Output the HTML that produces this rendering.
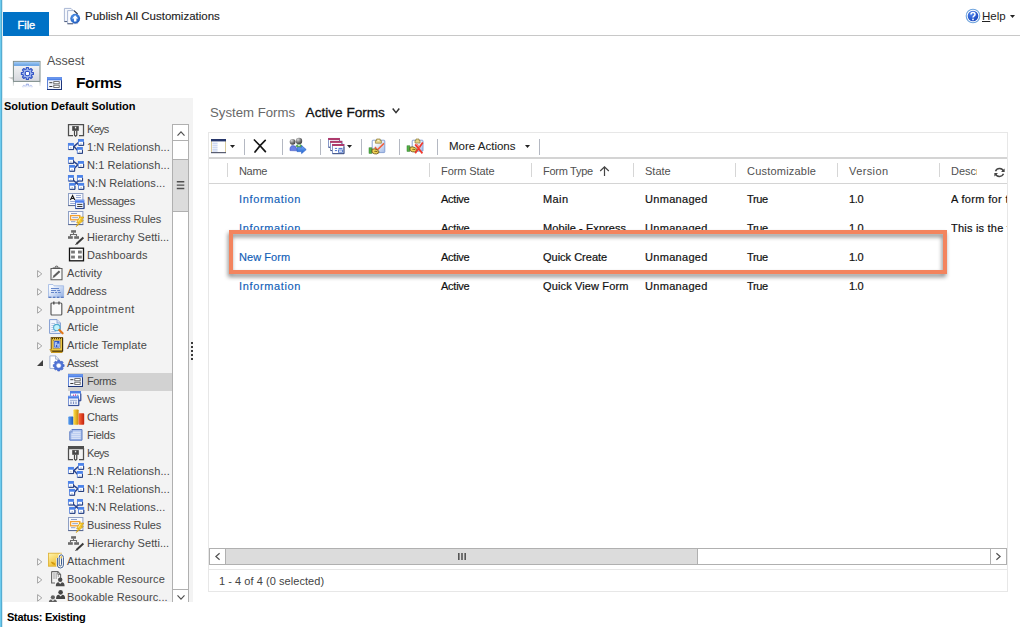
<!DOCTYPE html>
<html><head><meta charset="utf-8"><title>Forms</title><style>
html,body{margin:0;padding:0;}
body{width:1020px;height:627px;overflow:hidden;background:#fff;position:relative;font-family:"Liberation Sans",sans-serif;font-size:11px;color:#333;}
.a{position:absolute;white-space:nowrap;}
.t{position:absolute;white-space:nowrap;line-height:14px;height:14px;}
svg{position:absolute;overflow:visible;}
.sep{position:absolute;width:1px;background:#b4b8c2;}
.hsep{position:absolute;width:1px;height:14px;top:163px;background:#d6d6d6;}
.cell{position:absolute;white-space:nowrap;line-height:14px;height:14px;color:#111;-webkit-text-stroke:0.2px #111;}
.lnk{-webkit-text-stroke:0.15px #1160b7 !important;}
.lnk{color:#1160b7;}
.hd{position:absolute;white-space:nowrap;line-height:14px;height:14px;color:#505050;top:164px;}
.ti{position:absolute;white-space:nowrap;line-height:14px;height:14px;color:#484848;}
</style></head><body>
<div class="a" style="left:0;top:0;width:1px;height:627px;background:#6ccbee"></div>
<div class="a" style="left:1px;top:0;width:1px;height:627px;background:#55add2"></div>
<div class="a" style="left:2px;top:0;width:1px;height:627px;background:#d8e9f0"></div>
<div class="a" style="left:3px;top:35px;width:1017px;height:1px;background:#c8c8c8"></div>
<div class="a" style="left:3px;top:12px;width:46px;height:24px;background:#0072c6"></div>
<div class="t" style="left:17.5px;top:17.5px;color:#fff;font-size:11px;letter-spacing:0px;-webkit-text-stroke:0.4px #fff">File</div>
<div class="t" style="left:85px;top:9px;color:#222;font-size:11.5px;-webkit-text-stroke:0.12px #222">Publish All Customizations</div>
<div class="t" style="left:982px;top:9px;color:#222;font-size:11.5px"><span style="text-decoration:underline">H</span>elp</div>
<svg style="left:1010px;top:15px" width="5" height="3" viewBox="0 0 5 3"><path d="M0 0 H5 L2.5 3 Z" fill="#222"/></svg>
<div class="t" style="left:47px;top:53px;font-size:12.5px;color:#505050;line-height:16px;height:16px">Assest</div>
<div class="t" style="left:76px;top:73px;font-size:15.5px;font-weight:bold;color:#000;line-height:20px;height:20px;letter-spacing:-0.35px">Forms</div>
<div class="a" style="left:3px;top:98px;width:190px;height:504px;background:#f3f3f3"></div>
<div class="t" style="left:4px;top:99px;font-weight:bold;color:#000">Solution Default Solution</div>
<div class="a" style="left:68px;top:373px;width:104px;height:18px;background:#d2d2d2"></div>
<div class="ti" style="left:87px;top:122px;letter-spacing:-0.7px">Keys</div>
<div class="ti" style="left:87px;top:140px;letter-spacing:0.09px">1:N Relationsh...</div>
<div class="ti" style="left:87px;top:158px;letter-spacing:0.09px">N:1 Relationsh...</div>
<div class="ti" style="left:87px;top:176px;letter-spacing:0.08px">N:N Relations...</div>
<div class="ti" style="left:87px;top:194px;letter-spacing:-0.28px">Messages</div>
<div class="ti" style="left:87px;top:212px;letter-spacing:-0.12px">Business Rules</div>
<div class="ti" style="left:87px;top:230px;letter-spacing:0.05px">Hierarchy Setti...</div>
<div class="ti" style="left:87px;top:248px;letter-spacing:0.12px">Dashboards</div>
<div class="ti" style="left:67px;top:266px;letter-spacing:0.04px">Activity</div>
<svg style="left:37px;top:270px" width="6" height="8" viewBox="0 0 6 8"><path d="M0.6 0.6 L4.8 3.9 L0.6 7.2 Z" fill="#fbfbfb" stroke="#a3a3a3" stroke-width="1"/></svg>
<div class="ti" style="left:67px;top:284px;letter-spacing:-0.11px">Address</div>
<svg style="left:37px;top:288px" width="6" height="8" viewBox="0 0 6 8"><path d="M0.6 0.6 L4.8 3.9 L0.6 7.2 Z" fill="#fbfbfb" stroke="#a3a3a3" stroke-width="1"/></svg>
<div class="ti" style="left:67px;top:302px;letter-spacing:0.56px">Appointment</div>
<svg style="left:37px;top:306px" width="6" height="8" viewBox="0 0 6 8"><path d="M0.6 0.6 L4.8 3.9 L0.6 7.2 Z" fill="#fbfbfb" stroke="#a3a3a3" stroke-width="1"/></svg>
<div class="ti" style="left:67px;top:320px;letter-spacing:0.13px">Article</div>
<svg style="left:37px;top:324px" width="6" height="8" viewBox="0 0 6 8"><path d="M0.6 0.6 L4.8 3.9 L0.6 7.2 Z" fill="#fbfbfb" stroke="#a3a3a3" stroke-width="1"/></svg>
<div class="ti" style="left:67px;top:338px;letter-spacing:0.12px">Article Template</div>
<svg style="left:37px;top:342px" width="6" height="8" viewBox="0 0 6 8"><path d="M0.6 0.6 L4.8 3.9 L0.6 7.2 Z" fill="#fbfbfb" stroke="#a3a3a3" stroke-width="1"/></svg>
<div class="ti" style="left:67px;top:356px;letter-spacing:-0.35px">Assest</div>
<svg style="left:37px;top:360px" width="6" height="6" viewBox="0 0 6 6"><path d="M6 0 L6 6 L0 6 Z" fill="#404040"/></svg>
<div class="ti" style="left:87px;top:374px;letter-spacing:-0.44px">Forms</div>
<div class="ti" style="left:87px;top:392px;letter-spacing:-0.24px">Views</div>
<div class="ti" style="left:87px;top:410px;letter-spacing:-0.24px">Charts</div>
<div class="ti" style="left:87px;top:428px;letter-spacing:-0.23px">Fields</div>
<div class="ti" style="left:87px;top:446px;letter-spacing:-0.7px">Keys</div>
<div class="ti" style="left:87px;top:464px;letter-spacing:0.09px">1:N Relationsh...</div>
<div class="ti" style="left:87px;top:482px;letter-spacing:0.09px">N:1 Relationsh...</div>
<div class="ti" style="left:87px;top:500px;letter-spacing:0.08px">N:N Relations...</div>
<div class="ti" style="left:87px;top:518px;letter-spacing:-0.12px">Business Rules</div>
<div class="ti" style="left:87px;top:536px;letter-spacing:0.05px">Hierarchy Setti...</div>
<div class="ti" style="left:67px;top:554px;letter-spacing:0.21px">Attachment</div>
<svg style="left:37px;top:558px" width="6" height="8" viewBox="0 0 6 8"><path d="M0.6 0.6 L4.8 3.9 L0.6 7.2 Z" fill="#fbfbfb" stroke="#a3a3a3" stroke-width="1"/></svg>
<div class="ti" style="left:67px;top:572px;letter-spacing:0.11px">Bookable Resource</div>
<svg style="left:37px;top:576px" width="6" height="8" viewBox="0 0 6 8"><path d="M0.6 0.6 L4.8 3.9 L0.6 7.2 Z" fill="#fbfbfb" stroke="#a3a3a3" stroke-width="1"/></svg>
<div class="ti" style="left:67px;top:590px;letter-spacing:0.09px">Bookable Resourc...</div>
<svg style="left:37px;top:594px" width="6" height="8" viewBox="0 0 6 8"><path d="M0.6 0.6 L4.8 3.9 L0.6 7.2 Z" fill="#fbfbfb" stroke="#a3a3a3" stroke-width="1"/></svg>
<div class="a" style="left:172px;top:124px;width:15px;height:478px;background:#fff;border-left:1px solid #b0b0b0;border-right:1px solid #b0b0b0"></div>
<div class="a" style="left:172px;top:124px;width:15px;height:15px;background:#fff;border:1px solid #b0b0b0"></div>
<svg style="left:176.5px;top:130.5px" width="8" height="5" viewBox="0 0 8 5"><path d="M0.5 4.7 L4 0.9 L7.5 4.7" fill="none" stroke="#505050" stroke-width="1.2"/></svg>
<div class="a" style="left:172px;top:159px;width:15px;height:51px;background:#dcdcdc;border:1px solid #b0b0b0"></div>
<svg style="left:176px;top:180px" width="9" height="10" viewBox="0 0 9 10"><path d="M0.8 1.7 H8.3 M0.8 5.1 H8.3 M0.8 8.5 H8.3" stroke="#505050" stroke-width="1.4"/></svg>
<div class="a" style="left:172px;top:589px;width:15px;height:13px;background:#fff;border:1px solid #b0b0b0;border-bottom:none"></div>
<svg style="left:176.5px;top:595px" width="8" height="5" viewBox="0 0 8 5"><path d="M0.5 0.3 L4 4.1 L7.5 0.3" fill="none" stroke="#505050" stroke-width="1.2"/></svg>
<div class="a" style="left:191px;top:342px;width:2px;height:2px;background:#3a3a3a"></div>
<div class="a" style="left:191px;top:346px;width:2px;height:2px;background:#3a3a3a"></div>
<div class="a" style="left:191px;top:350px;width:2px;height:2px;background:#3a3a3a"></div>
<div class="a" style="left:191px;top:354px;width:2px;height:2px;background:#3a3a3a"></div>
<div class="a" style="left:191px;top:358px;width:2px;height:2px;background:#3a3a3a"></div>
<div class="t" style="left:210px;top:104px;font-size:13.2px;color:#686868;line-height:18px;height:18px">System Forms</div>
<div class="t" style="left:305.6px;top:104.4px;font-size:13.6px;color:#111;line-height:18px;height:18px;-webkit-text-stroke:0.3px #111">Active Forms</div>
<svg style="left:392px;top:108px" width="8" height="6" viewBox="0 0 8 6"><path d="M0.7 0.5 L4 4.6 L7.3 0.5" fill="none" stroke="#333" stroke-width="1.5"/></svg>
<div class="a" style="left:208px;top:132px;width:798px;height:436px;border:1px solid #e7e7e7;border-bottom:none"></div>
<div class="a" style="left:209px;top:157px;width:798px;height:2px;background:#d4d4d4"></div>
<div class="a" style="left:209px;top:183px;width:798px;height:1px;background:#d4d4d4"></div>
<div class="sep" style="left:244px;top:139px;height:16px"></div>
<div class="sep" style="left:282px;top:139px;height:16px"></div>
<div class="sep" style="left:320px;top:139px;height:16px"></div>
<div class="sep" style="left:361px;top:139px;height:16px"></div>
<div class="sep" style="left:399px;top:139px;height:16px"></div>
<div class="sep" style="left:437px;top:139px;height:16px"></div>
<div class="sep" style="left:539px;top:139px;height:16px"></div>
<div class="t" style="left:449px;top:139px;font-size:11.5px;color:#222;-webkit-text-stroke:0.08px #222">More Actions</div>
<svg style="left:525px;top:145px" width="5" height="3" viewBox="0 0 5 3"><path d="M0 0 H5 L2.5 3 Z" fill="#222"/></svg>
<svg style="left:230px;top:145px" width="5" height="3" viewBox="0 0 5 3"><path d="M0 0 H5 L2.5 3 Z" fill="#222"/></svg>
<svg style="left:347px;top:145px" width="5" height="3" viewBox="0 0 5 3"><path d="M0 0 H5 L2.5 3 Z" fill="#222"/></svg>
<div class="hsep" style="left:227px"></div>
<div class="hsep" style="left:429px"></div>
<div class="hsep" style="left:531px"></div>
<div class="hsep" style="left:633px"></div>
<div class="hsep" style="left:735px"></div>
<div class="hsep" style="left:837px"></div>
<div class="hsep" style="left:939px"></div>
<div class="hd" style="left:239px;letter-spacing:-0.34px">Name</div>
<div class="hd" style="left:441px;letter-spacing:-0.09px">Form State</div>
<div class="hd" style="left:543px;letter-spacing:-0.28px">Form Type</div>
<div class="hd" style="left:645px">State</div>
<div class="hd" style="left:747px;letter-spacing:0.21px">Customizable</div>
<div class="hd" style="left:849px;letter-spacing:0.4px">Version</div>
<div class="hd" style="left:951px;width:26px;overflow:hidden">Descr</div>
<svg style="left:599px;top:166px" width="11" height="10" viewBox="0 0 11 10"><path d="M5.5 0.8 V10 M1.2 5 L5.5 0.8 L9.8 5" fill="none" stroke="#444" stroke-width="1.2"/></svg>
<div class="cell lnk" style="left:239px;top:192px;letter-spacing:0.64px">Information</div>
<div class="cell" style="left:441px;top:192px;letter-spacing:-0.25px">Active</div>
<div class="cell" style="left:543px;top:192px;letter-spacing:0.39px">Main</div>
<div class="cell" style="left:645px;top:192px;letter-spacing:0.31px">Unmanaged</div>
<div class="cell" style="left:747px;top:192px;letter-spacing:-0.36px">True</div>
<div class="cell" style="left:849px;top:192px;letter-spacing:-0.34px">1.0</div>
<div class="cell" style="left:951px;top:192px;width:55.6px;overflow:hidden;letter-spacing:0.34px">A form for this entity</div>
<div class="cell lnk" style="left:239px;top:221px;letter-spacing:0.64px">Information</div>
<div class="cell" style="left:441px;top:221px;letter-spacing:-0.25px">Active</div>
<div class="cell" style="left:543px;top:221px;letter-spacing:0.08px">Mobile - Express</div>
<div class="cell" style="left:645px;top:221px;letter-spacing:0.31px">Unmanaged</div>
<div class="cell" style="left:747px;top:221px;letter-spacing:-0.36px">True</div>
<div class="cell" style="left:849px;top:221px;letter-spacing:-0.34px">1.0</div>
<div class="cell" style="left:951px;top:221px;width:55.6px;overflow:hidden;letter-spacing:0.22px">This is the form</div>
<div class="cell lnk" style="left:239px;top:250px;letter-spacing:0.06px">New Form</div>
<div class="cell" style="left:441px;top:250px;letter-spacing:-0.25px">Active</div>
<div class="cell" style="left:543px;top:250px">Quick Create</div>
<div class="cell" style="left:645px;top:250px;letter-spacing:0.31px">Unmanaged</div>
<div class="cell" style="left:747px;top:250px;letter-spacing:-0.36px">True</div>
<div class="cell" style="left:849px;top:250px;letter-spacing:-0.34px">1.0</div>
<div class="cell lnk" style="left:239px;top:279px;letter-spacing:0.64px">Information</div>
<div class="cell" style="left:441px;top:279px;letter-spacing:-0.25px">Active</div>
<div class="cell" style="left:543px;top:279px;letter-spacing:0.13px">Quick View Form</div>
<div class="cell" style="left:645px;top:279px;letter-spacing:0.31px">Unmanaged</div>
<div class="cell" style="left:747px;top:279px;letter-spacing:-0.36px">True</div>
<div class="cell" style="left:849px;top:279px;letter-spacing:-0.34px">1.0</div>
<div class="a" style="left:229px;top:230px;width:710px;height:36px;border:4px solid #f3845e;filter:drop-shadow(-1px 3px 2px rgba(0,0,0,0.45))"></div>
<div class="a" style="left:209px;top:548px;width:796px;height:15px;background:#fff;border:1px solid #b0b0b0"></div>
<div class="a" style="left:225px;top:548px;width:471px;height:15px;background:#dcdcdc;border:1px solid #b0b0b0"></div>
<div class="a" style="left:990px;top:548px;width:1px;height:17px;background:#b0b0b0"></div>
<svg style="left:457px;top:553px" width="10" height="7" viewBox="0 0 10 7"><path d="M1.8 0 V7 M5 0 V7 M8.2 0 V7" stroke="#555" stroke-width="1.6"/></svg>
<svg style="left:214.5px;top:553px" width="5" height="7" viewBox="0 0 5 7"><path d="M4.6 0.3 L0.9 3.5 L4.6 6.7" fill="none" stroke="#505050" stroke-width="1.2"/></svg>
<svg style="left:996px;top:553px" width="5" height="7" viewBox="0 0 5 7"><path d="M0.4 0.3 L4.1 3.5 L0.4 6.7" fill="none" stroke="#505050" stroke-width="1.2"/></svg>
<div class="a" style="left:208px;top:569px;width:798px;height:21px;border:1px solid #e7e7e7"></div>
<div class="t" style="left:219px;top:574px;color:#444;letter-spacing:0.05px">1 - 4 of 4 (0 selected)</div>
<svg style="left:68px;top:124px" width="17" height="15" viewBox="0 0 17 15"><path d="M5 11.6 H0.5 V0.5 H15.5 V11.6 H11" fill="none" stroke="#4e4e4e" stroke-width="1.25"/><rect x="4.2" y="2.1" width="6.6" height="4.7" fill="#464646"/><rect x="6.9" y="2.8" width="1.3" height="1.6" fill="#f0f0f0"/><path d="M5.9 6.8 V11.4 L7.6 13 L9.4 11.4 V6.8 Z" fill="#464646"/><rect x="7.05" y="7" width="1.1" height="4.2" fill="#f4f4f4"/></svg>
<svg style="left:68px;top:139px" width="17" height="16" viewBox="0 0 17 16"><path d="M6 7.4 L10.4 3.6 M6 7.4 L9.4 11.2" stroke="#2a458f" stroke-width="1.5" fill="none"/><rect x="0.4" y="4.4" width="5" height="6" fill="#fff" stroke="#5f88dc" stroke-width="0.9"/><rect x="0.10000000000000003" y="4.1000000000000005" width="5.6" height="2.6" fill="#4a82ea"/><path d="M0.6000000000000001 10.6 H5.6000000000000005 V7.0" fill="none" stroke="#1d3370" stroke-width="0.9"/><rect x="2.4" y="8.3" width="1" height="1" fill="#8a93a8"/><rect x="10.5" y="0.5" width="5" height="5.7" fill="#fff" stroke="#5f88dc" stroke-width="0.9"/><rect x="10.2" y="0.2" width="5.6" height="2.6" fill="#4a82ea"/><path d="M10.7 6.4 H15.7 V3.1" fill="none" stroke="#1d3370" stroke-width="0.9"/><rect x="12.5" y="4.4" width="1" height="1" fill="#8a93a8"/><rect x="9.3" y="8.5" width="5" height="5.7" fill="#fff" stroke="#5f88dc" stroke-width="0.9"/><rect x="9.0" y="8.2" width="5.6" height="2.6" fill="#4a82ea"/><path d="M9.5 14.399999999999999 H14.5 V11.1" fill="none" stroke="#1d3370" stroke-width="0.9"/><rect x="11.3" y="12.4" width="1" height="1" fill="#8a93a8"/></svg>
<svg style="left:68px;top:157px" width="17" height="16" viewBox="0 0 17 16"><path d="M5.6 4.6 L10 7.6 M6.6 11 L10 7.6" stroke="#2a458f" stroke-width="1.5" fill="none"/><rect x="0.4" y="0.5" width="5" height="5.7" fill="#fff" stroke="#5f88dc" stroke-width="0.9"/><rect x="0.10000000000000003" y="0.2" width="5.6" height="2.6" fill="#4a82ea"/><path d="M0.6000000000000001 6.4 H5.6000000000000005 V3.1" fill="none" stroke="#1d3370" stroke-width="0.9"/><rect x="2.4" y="4.4" width="1" height="1" fill="#8a93a8"/><rect x="1.5" y="8.4" width="5" height="5.7" fill="#fff" stroke="#5f88dc" stroke-width="0.9"/><rect x="1.2" y="8.1" width="5.6" height="2.6" fill="#4a82ea"/><path d="M1.7 14.3 H6.7 V11.0" fill="none" stroke="#1d3370" stroke-width="0.9"/><rect x="3.5" y="12.3" width="1" height="1" fill="#8a93a8"/><rect x="10.3" y="4.5" width="5.2" height="5.8" fill="#fff" stroke="#5f88dc" stroke-width="0.9"/><rect x="10.0" y="4.2" width="5.8" height="2.6" fill="#4a82ea"/><path d="M10.5 10.5 H15.7 V7.1" fill="none" stroke="#1d3370" stroke-width="0.9"/><rect x="12.3" y="8.4" width="1.2000000000000002" height="1" fill="#8a93a8"/></svg>
<svg style="left:68px;top:175px" width="17" height="16" viewBox="0 0 17 16"><path d="M5 5 L11.6 10.6 M11 5 L5.4 10.6" stroke="#2a458f" stroke-width="1.5" fill="none"/><rect x="0.4" y="0.5" width="5" height="5.4" fill="#fff" stroke="#5f88dc" stroke-width="0.9"/><rect x="0.10000000000000003" y="0.2" width="5.6" height="2.6" fill="#4a82ea"/><path d="M0.6000000000000001 6.1000000000000005 H5.6000000000000005 V3.1" fill="none" stroke="#1d3370" stroke-width="0.9"/><rect x="2.4" y="4.4" width="1" height="1" fill="#8a93a8"/><rect x="9.4" y="0.5" width="5" height="5.4" fill="#fff" stroke="#5f88dc" stroke-width="0.9"/><rect x="9.1" y="0.2" width="5.6" height="2.6" fill="#4a82ea"/><path d="M9.6 6.1000000000000005 H14.6 V3.1" fill="none" stroke="#1d3370" stroke-width="0.9"/><rect x="11.4" y="4.4" width="1" height="1" fill="#8a93a8"/><rect x="1.6" y="8.4" width="5.2" height="5.8" fill="#fff" stroke="#5f88dc" stroke-width="0.9"/><rect x="1.3" y="8.1" width="5.8" height="2.6" fill="#4a82ea"/><path d="M1.8 14.399999999999999 H7.000000000000001 V11.0" fill="none" stroke="#1d3370" stroke-width="0.9"/><rect x="3.6" y="12.3" width="1.2000000000000002" height="1" fill="#8a93a8"/><rect x="10.5" y="8.4" width="5.2" height="5.8" fill="#fff" stroke="#5f88dc" stroke-width="0.9"/><rect x="10.2" y="8.1" width="5.8" height="2.6" fill="#4a82ea"/><path d="M10.7 14.399999999999999 H15.899999999999999 V11.0" fill="none" stroke="#1d3370" stroke-width="0.9"/><rect x="12.5" y="12.3" width="1.2000000000000002" height="1" fill="#8a93a8"/></svg>
<svg style="left:68px;top:193px" width="17" height="16" viewBox="0 0 17 16"><rect x="0.5" y="0.5" width="14.4" height="12" fill="#f7f9fd" stroke="#8e9fc4" stroke-width="1"/><path d="M0.2 12.6 H15.2" stroke="#55668e" stroke-width="1"/><path d="M2.4 7 L4.6 2.6 L6.8 7 M3.3 5.5 H5.9" stroke="#1a1a1a" stroke-width="1.2" fill="none"/><path d="M8 2.5 H13 M8 4.5 H13 M2.2 8.5 H7 M2.2 10.5 H7" stroke="#96a9d6" stroke-width="1"/><rect x="7.5" y="7.2" width="8.3" height="8.2" fill="#f0f4fe" stroke="#5578cc" stroke-width="0.9"/><rect x="7.1" y="6.8" width="9.1" height="2.9" fill="#4a7cee"/><path d="M7.3 7.6 H16" stroke="#7ea2f6" stroke-width="0.8"/><path d="M9.2 11.4 H14.4 M9.2 13.5 H14.4" stroke="#3a3a3a" stroke-width="1"/><path d="M7.4 15.6 H16.2 V9.8" stroke="#24397a" stroke-width="0.9" fill="none"/></svg>
<svg style="left:68px;top:211px" width="17" height="17" viewBox="0 0 17 17"><rect x="0.5" y="0.5" width="14.4" height="13" fill="#f8fafe" stroke="#8e9fc4" stroke-width="1"/><path d="M0.2 13.6 H15.2" stroke="#55668e" stroke-width="1"/><path d="M3 2.5 H9" stroke="#8ea0c8" stroke-width="1"/><rect x="2.6" y="4.6" width="9.2" height="4.2" fill="#fff" stroke="#f2a030" stroke-width="1.3"/><path d="M4.2 6.7 H10" stroke="#8ea0c8" stroke-width="1"/><path d="M3 10.7 H7.4" stroke="#8ea0c8" stroke-width="1"/><path d="M11.6 6 L15.8 6 L13.4 9.8 L15.4 9.6 L8.2 15.6 L10.6 11.4 L8.6 11.8 Z" fill="#f6c828" stroke="#c8960e" stroke-width="0.6"/><path d="M12.4 6.8 L10.2 10.6" stroke="#fff3b0" stroke-width="0.9"/></svg>
<svg style="left:68px;top:230px" width="17" height="16" viewBox="0 0 17 16"><rect x="3.1" y="0.2" width="4.9" height="2.5" fill="#6a6a6a"/><rect x="0" y="6.2" width="4.8" height="2.6" fill="#6a6a6a"/><rect x="6.2" y="6.2" width="4.8" height="2.6" fill="#6a6a6a"/><path d="M5.5 2.6 V4.5 M2.5 6.3 V4.5 H8.5 V6.3" stroke="#6a6a6a" stroke-width="1.1" fill="none"/><path d="M8.4 14 L15.4 7.6" stroke="#3a3a3a" stroke-width="2"/><path d="M7.4 15 L9 13.4" stroke="#3a3a3a" stroke-width="1"/></svg>
<svg style="left:68px;top:247.4px" width="16" height="15" viewBox="0 0 16 15"><rect x="1.5" y="1.2" width="14" height="12.6" fill="#fff" stroke="#111" stroke-width="1.3"/><rect x="3.1" y="3.6" width="3.8" height="2.9" fill="#7a7a7a"/><rect x="10" y="3.6" width="3.8" height="2.9" fill="#7a7a7a"/><rect x="3.1" y="8.6" width="3.8" height="2.9" fill="#7a7a7a"/><rect x="10" y="8.6" width="3.8" height="2.9" fill="#7a7a7a"/></svg>
<svg style="left:49.5px;top:265px" width="14" height="16" viewBox="0 0 14 16"><path d="M2.9 3.4 H1 V14.8 H12 V3.4 H10.1" fill="#fafafa" stroke="#5a5a5a" stroke-width="1.05"/><rect x="2.7" y="2.5" width="7.6" height="1.5" fill="#555"/><path d="M5 2.6 Q6.6 -0.6 8.2 2.6" fill="none" stroke="#666" stroke-width="1.1"/><path d="M3.6 11.8 L9.6 6.2" stroke="#5e5e5e" stroke-width="2.1"/><path d="M2.6 12.9 L4 11.6" stroke="#444" stroke-width="1"/></svg>
<svg style="left:48px;top:284px" width="17" height="15" viewBox="0 0 17 15"><defs><linearGradient id="adg" x1="0" y1="0" x2="1" y2="1"><stop offset="0.2" stop-color="#f6f9fe"/><stop offset="1" stop-color="#8eade4"/></linearGradient></defs><path d="M0.5 0.5 H5 L6 1.8 H15.6 V13 H13 Q12.2 14.6 11.4 13 H9 Q8.2 14.6 7.4 13 H5 Q4.2 14.6 3.4 13 H0.5 Z" fill="url(#adg)" stroke="#9db6e2" stroke-width="0.8"/><path d="M0.4 13.3 H3.4 M5 13.3 H7.4 M9 13.3 H11.4 M13 13.3 H15.8" stroke="#3f66b8" stroke-width="1"/><path d="M3 4.5 H11 M3 6.5 H8 M9.2 6.5 H12 M3 8.5 H6 M7 8.5 H9 M10 8.5 H12.8" stroke="#5f82c8" stroke-width="0.95"/></svg>
<svg style="left:49.5px;top:301.4px" width="14" height="15" viewBox="0 0 14 15"><rect x="1" y="2" width="10.8" height="12" rx="1" fill="#fafafa" stroke="#5c5c5c" stroke-width="1.2"/><path d="M3.8 0.5 V3.5 M9 0.5 V3.5" stroke="#555" stroke-width="1.5"/></svg>
<svg style="left:48.8px;top:319px" width="15" height="16" viewBox="0 0 15 16"><path d="M0.6 0.6 H8 L11.4 4 V14.4 H0.6 Z" fill="#f3f7fd" stroke="#7f9bd0" stroke-width="1"/><path d="M8 0.6 V4 H11.4" fill="#dbe6f8" stroke="#7f9bd0" stroke-width="0.8"/><path d="M2.4 4.5 H6 M2.4 6.5 H5 M2.4 8.5 H4.6 M2.4 10.5 H5 M2.4 12.5 H7" stroke="#b5c5e4" stroke-width="1"/><circle cx="7.8" cy="8.6" r="3.2" fill="#bff2fb" stroke="#52a9cf" stroke-width="1.1"/><path d="M10.3 11 L13.6 14.3" stroke="#e0781c" stroke-width="2.2" stroke-linecap="round"/></svg>
<svg style="left:49px;top:336.6px" width="15" height="16" viewBox="0 0 15 16"><rect x="2.2" y="0.6" width="11.4" height="13.4" fill="#efc840" stroke="#6a4c0c" stroke-width="1"/><path d="M13.6 1 V14.4 H3" fill="none" stroke="#3a2a06" stroke-width="1"/><path d="M3 1.7 H13" stroke="#4a3a10" stroke-width="1.2" stroke-dasharray="1 1"/><rect x="4.2" y="3.2" width="7.4" height="8.4" fill="#fff" stroke="#8c6d1c" stroke-width="0.6"/><rect x="5.2" y="4" width="5.4" height="6.6" fill="#2c55c4"/><path d="M6.4 9.8 V5.4 H7.8 V7.4 H6.6 M8.8 9.8 V7 H9.8 V9.8" stroke="#cfe0ff" stroke-width="0.9" fill="none"/><path d="M0.6 12.6 H3 M1.2 14 H3.4 M2 15.4 H13.4" stroke="#c99a1e" stroke-width="1.1"/></svg>
<svg style="left:48.8px;top:354.6px" width="17" height="17" viewBox="0 0 17 17"><path d="M0.9 0.9 H6.6 L10 4.2 V13.4 H0.9 Z" fill="#fff" stroke="#a3b2d0" stroke-width="1"/><path d="M6.6 0.9 V4.2 H10" fill="#e8ecf6" stroke="#8e9dbc" stroke-width="0.8"/><path d="M8.75 5.18 L10.65 5.18 L10.75 6.22 L12.05 6.76 L12.86 6.10 L14.20 7.44 L13.54 8.25 L14.08 9.55 L15.12 9.65 L15.12 11.55 L14.08 11.65 L13.54 12.95 L14.20 13.76 L12.86 15.10 L12.05 14.44 L10.75 14.98 L10.65 16.02 L8.75 16.02 L8.65 14.98 L7.35 14.44 L6.54 15.10 L5.20 13.76 L5.86 12.95 L5.32 11.65 L4.28 11.55 L4.28 9.65 L5.32 9.55 L5.86 8.25 L5.20 7.44 L6.54 6.10 L7.35 6.76 L8.65 6.22 Z" fill="#4f74d8" stroke="#3155c0" stroke-width="0.6" stroke-linejoin="round"/><circle cx="9.7" cy="10.6" r="3.0" fill="#aebff0" stroke="#3155c0" stroke-width="0.6"/><circle cx="9.7" cy="10.6" r="1.9" fill="#fff"/></svg>
<svg style="left:68px;top:374px" width="15" height="13" viewBox="0 0 15 13"><rect x="0.5" y="0.5" width="14" height="12" fill="#f1f4fc" stroke="#5f84d8" stroke-width="1"/><rect x="0.3" y="0.3" width="14.4" height="3" fill="#4f82e8"/><path d="M0.3 1 H14.7" stroke="#7fa6f2" stroke-width="1"/><path d="M0 12.5 H15 M14.5 3.4 V13" stroke="#1d357a" stroke-width="1"/><path d="M2.3 5.7 H5.4 M2.3 9.5 H5.4" stroke="#3a3a3a" stroke-width="1"/><rect x="6.8" y="4.6" width="5.4" height="2.2" fill="#fff" stroke="#555" stroke-width="0.8"/><rect x="6.8" y="8.2" width="5.4" height="2.2" fill="#fff" stroke="#555" stroke-width="0.8"/></svg>
<svg style="left:68px;top:391px" width="14" height="15" viewBox="0 0 14 15"><rect x="2.5" y="0.5" width="10" height="9" fill="#fff" stroke="#6f8ad0" stroke-width="0.9"/><rect x="2.1" y="0.1" width="10.8" height="2.4" fill="#4a7ee6"/><path d="M2.4 9.8 H12.9 V2.6" fill="none" stroke="#26408a" stroke-width="0.9"/><path d="M5.5 3.6 V5 M7.6 3.2 V5" stroke="#e0409a" stroke-width="1"/><path d="M9.8 3.6 V5" stroke="#3f8ae0" stroke-width="1"/><rect x="0.5" y="5.3" width="10" height="9" fill="#f4f7fe" stroke="#6f8ad0" stroke-width="0.9"/><rect x="0.1" y="4.9" width="10.8" height="2.6" fill="#4a7ee6"/><path d="M0.4 5.6 H10.6" stroke="#7fa6f2" stroke-width="0.8"/><path d="M0.4 14.6 H10.9 V7.6" fill="none" stroke="#26408a" stroke-width="0.9"/><path d="M2 9.3 H9.2" stroke="#8fa3cc" stroke-width="0.9"/><path d="M3 10.6 V13 M5.5 10.6 V13 M8 10.6 V13" stroke="#7f93c4" stroke-width="1.2"/></svg>
<svg style="left:67.6px;top:409px" width="17" height="16" viewBox="0 0 17 16"><defs><linearGradient id="cb" x1="0" x2="1"><stop offset="0" stop-color="#5aa0f0"/><stop offset="1" stop-color="#1c56b8"/></linearGradient><linearGradient id="cy" x1="0" x2="1"><stop offset="0" stop-color="#ffe04a"/><stop offset="1" stop-color="#c98a06"/></linearGradient><linearGradient id="cr" x1="0" x2="1"><stop offset="0" stop-color="#ff6a3a"/><stop offset="1" stop-color="#c0200c"/></linearGradient></defs><rect x="0.3" y="7.4" width="5.2" height="8.4" rx="0.8" fill="url(#cb)"/><rect x="5.4" y="0.4" width="5.2" height="15.4" rx="0.8" fill="url(#cy)"/><rect x="10.6" y="4.2" width="5.6" height="11.6" rx="0.8" fill="url(#cr)"/></svg>
<svg style="left:68.6px;top:429px" width="14" height="12" viewBox="0 0 14 12"><path d="M3 0.5 H13 V11.2 H0.8 V2.8 Z" fill="#a9bfec" stroke="#5c7cc4" stroke-width="1"/><path d="M3 0.5 V2.8 H0.8" fill="#dce6f8" stroke="#5c7cc4" stroke-width="0.7"/><path d="M4 3.2 H11.6 M2.4 5.2 H11.6 M2.4 7.2 H11.6 M2.4 9.2 H11.6" stroke="#e9effb" stroke-width="1"/></svg>
<svg style="left:68px;top:448px" width="17" height="15" viewBox="0 0 17 15"><path d="M5 11.6 H0.5 V0.5 H15.5 V11.6 H11" fill="none" stroke="#4e4e4e" stroke-width="1.25"/><rect x="4.2" y="2.1" width="6.6" height="4.7" fill="#464646"/><rect x="6.9" y="2.8" width="1.3" height="1.6" fill="#f0f0f0"/><path d="M5.9 6.8 V11.4 L7.6 13 L9.4 11.4 V6.8 Z" fill="#464646"/><rect x="7.05" y="7" width="1.1" height="4.2" fill="#f4f4f4"/></svg>
<svg style="left:68px;top:446px" width="16" height="3" viewBox="0 0 16 3"><rect x="0" y="0" width="16" height="2.6" fill="#4e4e4e"/></svg>
<svg style="left:68px;top:463px" width="17" height="16" viewBox="0 0 17 16"><path d="M6 7.4 L10.4 3.6 M6 7.4 L9.4 11.2" stroke="#2a458f" stroke-width="1.5" fill="none"/><rect x="0.4" y="4.4" width="5" height="6" fill="#fff" stroke="#5f88dc" stroke-width="0.9"/><rect x="0.10000000000000003" y="4.1000000000000005" width="5.6" height="2.6" fill="#4a82ea"/><path d="M0.6000000000000001 10.6 H5.6000000000000005 V7.0" fill="none" stroke="#1d3370" stroke-width="0.9"/><rect x="2.4" y="8.3" width="1" height="1" fill="#8a93a8"/><rect x="10.5" y="0.5" width="5" height="5.7" fill="#fff" stroke="#5f88dc" stroke-width="0.9"/><rect x="10.2" y="0.2" width="5.6" height="2.6" fill="#4a82ea"/><path d="M10.7 6.4 H15.7 V3.1" fill="none" stroke="#1d3370" stroke-width="0.9"/><rect x="12.5" y="4.4" width="1" height="1" fill="#8a93a8"/><rect x="9.3" y="8.5" width="5" height="5.7" fill="#fff" stroke="#5f88dc" stroke-width="0.9"/><rect x="9.0" y="8.2" width="5.6" height="2.6" fill="#4a82ea"/><path d="M9.5 14.399999999999999 H14.5 V11.1" fill="none" stroke="#1d3370" stroke-width="0.9"/><rect x="11.3" y="12.4" width="1" height="1" fill="#8a93a8"/></svg>
<svg style="left:68px;top:481px" width="17" height="16" viewBox="0 0 17 16"><path d="M5.6 4.6 L10 7.6 M6.6 11 L10 7.6" stroke="#2a458f" stroke-width="1.5" fill="none"/><rect x="0.4" y="0.5" width="5" height="5.7" fill="#fff" stroke="#5f88dc" stroke-width="0.9"/><rect x="0.10000000000000003" y="0.2" width="5.6" height="2.6" fill="#4a82ea"/><path d="M0.6000000000000001 6.4 H5.6000000000000005 V3.1" fill="none" stroke="#1d3370" stroke-width="0.9"/><rect x="2.4" y="4.4" width="1" height="1" fill="#8a93a8"/><rect x="1.5" y="8.4" width="5" height="5.7" fill="#fff" stroke="#5f88dc" stroke-width="0.9"/><rect x="1.2" y="8.1" width="5.6" height="2.6" fill="#4a82ea"/><path d="M1.7 14.3 H6.7 V11.0" fill="none" stroke="#1d3370" stroke-width="0.9"/><rect x="3.5" y="12.3" width="1" height="1" fill="#8a93a8"/><rect x="10.3" y="4.5" width="5.2" height="5.8" fill="#fff" stroke="#5f88dc" stroke-width="0.9"/><rect x="10.0" y="4.2" width="5.8" height="2.6" fill="#4a82ea"/><path d="M10.5 10.5 H15.7 V7.1" fill="none" stroke="#1d3370" stroke-width="0.9"/><rect x="12.3" y="8.4" width="1.2000000000000002" height="1" fill="#8a93a8"/></svg>
<svg style="left:68px;top:499px" width="17" height="16" viewBox="0 0 17 16"><path d="M5 5 L11.6 10.6 M11 5 L5.4 10.6" stroke="#2a458f" stroke-width="1.5" fill="none"/><rect x="0.4" y="0.5" width="5" height="5.4" fill="#fff" stroke="#5f88dc" stroke-width="0.9"/><rect x="0.10000000000000003" y="0.2" width="5.6" height="2.6" fill="#4a82ea"/><path d="M0.6000000000000001 6.1000000000000005 H5.6000000000000005 V3.1" fill="none" stroke="#1d3370" stroke-width="0.9"/><rect x="2.4" y="4.4" width="1" height="1" fill="#8a93a8"/><rect x="9.4" y="0.5" width="5" height="5.4" fill="#fff" stroke="#5f88dc" stroke-width="0.9"/><rect x="9.1" y="0.2" width="5.6" height="2.6" fill="#4a82ea"/><path d="M9.6 6.1000000000000005 H14.6 V3.1" fill="none" stroke="#1d3370" stroke-width="0.9"/><rect x="11.4" y="4.4" width="1" height="1" fill="#8a93a8"/><rect x="1.6" y="8.4" width="5.2" height="5.8" fill="#fff" stroke="#5f88dc" stroke-width="0.9"/><rect x="1.3" y="8.1" width="5.8" height="2.6" fill="#4a82ea"/><path d="M1.8 14.399999999999999 H7.000000000000001 V11.0" fill="none" stroke="#1d3370" stroke-width="0.9"/><rect x="3.6" y="12.3" width="1.2000000000000002" height="1" fill="#8a93a8"/><rect x="10.5" y="8.4" width="5.2" height="5.8" fill="#fff" stroke="#5f88dc" stroke-width="0.9"/><rect x="10.2" y="8.1" width="5.8" height="2.6" fill="#4a82ea"/><path d="M10.7 14.399999999999999 H15.899999999999999 V11.0" fill="none" stroke="#1d3370" stroke-width="0.9"/><rect x="12.5" y="12.3" width="1.2000000000000002" height="1" fill="#8a93a8"/></svg>
<svg style="left:68px;top:517px" width="17" height="17" viewBox="0 0 17 17"><rect x="0.5" y="0.5" width="14.4" height="13" fill="#f8fafe" stroke="#8e9fc4" stroke-width="1"/><path d="M0.2 13.6 H15.2" stroke="#55668e" stroke-width="1"/><path d="M3 2.5 H9" stroke="#8ea0c8" stroke-width="1"/><rect x="2.6" y="4.6" width="9.2" height="4.2" fill="#fff" stroke="#f2a030" stroke-width="1.3"/><path d="M4.2 6.7 H10" stroke="#8ea0c8" stroke-width="1"/><path d="M3 10.7 H7.4" stroke="#8ea0c8" stroke-width="1"/><path d="M11.6 6 L15.8 6 L13.4 9.8 L15.4 9.6 L8.2 15.6 L10.6 11.4 L8.6 11.8 Z" fill="#f6c828" stroke="#c8960e" stroke-width="0.6"/><path d="M12.4 6.8 L10.2 10.6" stroke="#fff3b0" stroke-width="0.9"/></svg>
<svg style="left:68px;top:536px" width="17" height="16" viewBox="0 0 17 16"><rect x="3.1" y="0.2" width="4.9" height="2.5" fill="#6a6a6a"/><rect x="0" y="6.2" width="4.8" height="2.6" fill="#6a6a6a"/><rect x="6.2" y="6.2" width="4.8" height="2.6" fill="#6a6a6a"/><path d="M5.5 2.6 V4.5 M2.5 6.3 V4.5 H8.5 V6.3" stroke="#6a6a6a" stroke-width="1.1" fill="none"/><path d="M8.4 14 L15.4 7.6" stroke="#3a3a3a" stroke-width="2"/><path d="M7.4 15 L9 13.4" stroke="#3a3a3a" stroke-width="1"/></svg>
<svg style="left:48.2px;top:553.4px" width="17" height="16" viewBox="0 0 17 16"><defs><linearGradient id="ay" x1="0" y1="0" x2="0.6" y2="1"><stop offset="0" stop-color="#fff6b0"/><stop offset="1" stop-color="#efba28"/></linearGradient></defs><rect x="0.4" y="0.2" width="13" height="13" fill="url(#ay)" stroke="#dcae30" stroke-width="0.8"/><path d="M2.8 9 Q5 8.4 7 10.6 Q7.6 12 6.4 12 Q4 11.8 2.8 9 Z" fill="#d29a0e"/><path d="M9.4 5 V12 Q9.4 15 12.4 15 Q15.4 15 15.4 12 V4.6 Q15.4 1.8 13.3 1.8 Q11.2 1.8 11.2 4.4 V11.6 Q11.2 12.9 12.4 12.9 Q13.5 12.9 13.5 11.6 V5.5" fill="none" stroke="#fff" stroke-width="2.4" stroke-opacity="0.9"/><path d="M9.4 5 V12 Q9.4 15 12.4 15 Q15.4 15 15.4 12 V4.6 Q15.4 1.8 13.3 1.8 Q11.2 1.8 11.2 4.4 V11.6 Q11.2 12.9 12.4 12.9 Q13.5 12.9 13.5 11.6 V5.5" fill="none" stroke="#34558c" stroke-width="0.95"/></svg>
<svg style="left:50.6px;top:570.6px" width="14" height="16" viewBox="0 0 14 16"><path d="M0.6 0.6 H6.8 L9.6 3.4 V7 M0.6 0.6 V12 H4" fill="none" stroke="#666" stroke-width="1.1"/><path d="M6.8 0.6 V3.4 H9.6" fill="none" stroke="#666" stroke-width="0.9"/><path d="M2.4 3 H3.6 M4.6 3 H5.8 M2.4 5 H3.6 M4.6 5 H5.8 M6.8 5 H8 M2.4 7 H3.6 M4.6 7 H5.8" stroke="#666" stroke-width="1.1"/><circle cx="9.2" cy="8.805" r="2.205" fill="#4a4a4a"/><path d="M4.789999999999999 15.209999999999999 Q4.789999999999999 11.22 7.52 11.22 L9.2 12.9 L10.879999999999999 11.22 Q13.61 11.22 13.61 15.209999999999999 Z" fill="#4a4a4a"/></svg>
<svg style="left:48.6px;top:590px" width="16" height="12" viewBox="0 0 16 12"><circle cx="3.9" cy="7.300000000000001" r="2.1" fill="#606060"/><path d="M-0.30000000000000027 13.399999999999999 Q-0.30000000000000027 9.600000000000001 2.3 9.600000000000001 L3.9 11.2 L5.5 9.600000000000001 Q8.1 9.600000000000001 8.1 13.399999999999999 Z" fill="#606060"/><circle cx="11.6" cy="2.3680000000000003" r="2.2680000000000002" fill="#444"/><path d="M7.063999999999999 8.956 Q7.063999999999999 4.852 9.872 4.852 L11.6 6.58 L13.328 4.852 Q16.136 4.852 16.136 8.956 Z" fill="#444"/></svg>
<svg style="left:47px;top:77px" width="15" height="13" viewBox="0 0 15 13"><rect x="0.5" y="0.5" width="14" height="12" fill="#f1f4fc" stroke="#5f84d8" stroke-width="1"/><rect x="0.3" y="0.3" width="14.4" height="3" fill="#4f82e8"/><path d="M0.3 1 H14.7" stroke="#7fa6f2" stroke-width="1"/><path d="M0 12.5 H15 M14.5 3.4 V13" stroke="#1d357a" stroke-width="1"/><path d="M2.3 5.7 H5.4 M2.3 9.5 H5.4" stroke="#3a3a3a" stroke-width="1"/><rect x="6.8" y="4.6" width="5.4" height="2.2" fill="#fff" stroke="#555" stroke-width="0.8"/><rect x="6.8" y="8.2" width="5.4" height="2.2" fill="#fff" stroke="#555" stroke-width="0.8"/></svg>
<svg style="left:7px;top:60px;overflow:hidden" width="36" height="28" viewBox="0 0 36 28"><defs><linearGradient id="et" x1="0" y1="0" x2="0" y2="1"><stop offset="0" stop-color="#a8cdf4"/><stop offset="1" stop-color="#5e9de2"/></linearGradient><linearGradient id="eb" x1="0" y1="0" x2="0" y2="1"><stop offset="0" stop-color="#fafafa"/><stop offset="1" stop-color="#d4d6dc"/></linearGradient><linearGradient id="er" x1="0" y1="0" x2="0" y2="1"><stop offset="0" stop-color="#fff" stop-opacity="0.05"/><stop offset="1" stop-color="#fff" stop-opacity="1"/></linearGradient><clipPath id="ec"><rect x="0" y="22" width="36" height="6"/></clipPath></defs><path d="M1 17.6 L6 19.8 L6 17 Z" fill="#cdcdcd"/><rect x="6.4" y="1.4" width="26.6" height="20" fill="url(#eb)" stroke="#7d8c8a" stroke-width="1"/><rect x="6.9" y="1.9" width="25.6" height="4" fill="url(#et)"/><path d="M19.35 7.49 L21.45 7.49 L21.47 9.03 L22.80 9.58 L23.91 8.51 L25.39 9.99 L24.32 11.10 L24.87 12.43 L26.41 12.45 L26.41 14.55 L24.87 14.57 L24.32 15.90 L25.39 17.01 L23.91 18.49 L22.80 17.42 L21.47 17.97 L21.45 19.51 L19.35 19.51 L19.33 17.97 L18.00 17.42 L16.89 18.49 L15.41 17.01 L16.48 15.90 L15.93 14.57 L14.39 14.55 L14.39 12.45 L15.93 12.43 L16.48 11.10 L15.41 9.99 L16.89 8.51 L18.00 9.58 L19.33 9.03 Z" fill="#a4baf0" stroke="#3556c6" stroke-width="1.15" stroke-linejoin="round"/><circle cx="20.4" cy="13.5" r="2.2" fill="#fff" stroke="#3556c6" stroke-width="1.15"/><rect x="19" y="12" width="2.8" height="2.8" fill="#fff"/><g clip-path="url(#ec)"><g transform="translate(0,43.8) scale(1,-1)"><path d="M19.35 7.49 L21.45 7.49 L21.47 9.03 L22.80 9.58 L23.91 8.51 L25.39 9.99 L24.32 11.10 L24.87 12.43 L26.41 12.45 L26.41 14.55 L24.87 14.57 L24.32 15.90 L25.39 17.01 L23.91 18.49 L22.80 17.42 L21.47 17.97 L21.45 19.51 L19.35 19.51 L19.33 17.97 L18.00 17.42 L16.89 18.49 L15.41 17.01 L16.48 15.90 L15.93 14.57 L14.39 14.55 L14.39 12.45 L15.93 12.43 L16.48 11.10 L15.41 9.99 L16.89 8.51 L18.00 9.58 L19.33 9.03 Z" fill="#c4d3f6" stroke="#5f7ad4" stroke-width="1.1" stroke-linejoin="round"/><circle cx="20.4" cy="13.5" r="2.2" fill="#fff" stroke="#5f7ad4" stroke-width="1.1"/></g><path d="M6.4 22 V26 M33 22 V26" stroke="#b8c0c0" stroke-width="1"/><rect x="4" y="22.4" width="31" height="5.6" fill="url(#er)"/></g></svg>
<svg style="left:63px;top:7px" width="19" height="18" viewBox="0 0 19 18"><defs><radialGradient id="pb" cx="0.4" cy="0.35" r="0.7"><stop offset="0" stop-color="#5a9cf0"/><stop offset="1" stop-color="#1a55b8"/></radialGradient></defs><path d="M1.4 1.4 H8 L10 3.4 V14.4 H1.4 Z" fill="#f6f8fc" stroke="#a9b7d4" stroke-width="1"/><path d="M1.4 14.6 H5" stroke="#4d5a78" stroke-width="1"/><path d="M4.6 3.6 H11 L14.6 7 V16.6 H4.6 Z" fill="#fbfcfe" stroke="#a9b7d4" stroke-width="1"/><path d="M11 3.6 L14.6 7" stroke="#3a4152" stroke-width="1.1"/><path d="M4.4 16.8 H10" stroke="#4d5a78" stroke-width="1"/><circle cx="12.2" cy="11.6" r="4.9" fill="url(#pb)"/><path d="M12.2 8.2 L15.2 11.4 H13.4 V14.6 H11 V11.4 H9.2 Z" fill="#fff"/></svg>
<svg style="left:965px;top:8px" width="16" height="16" viewBox="0 0 16 16"><defs><radialGradient id="hb" cx="0.35" cy="0.3" r="0.8"><stop offset="0" stop-color="#4f86ee"/><stop offset="1" stop-color="#1540b8"/></radialGradient></defs><circle cx="8" cy="8" r="6.8" fill="#fff" stroke="#6fa4de" stroke-width="1.1"/><circle cx="8" cy="8" r="5.3" fill="url(#hb)"/><path d="M6 6.4 Q6 4.4 8 4.4 Q10 4.4 10 6.2 Q10 7.4 8.9 8 Q8 8.6 8 9.6" fill="none" stroke="#fff" stroke-width="1.5"/><circle cx="8" cy="11.4" r="0.9" fill="#fff"/></svg>
<svg style="left:211px;top:139px" width="15" height="15" viewBox="0 0 15 15"><rect x="0.5" y="0.5" width="14" height="13" fill="#fff" stroke="#d9cb9c" stroke-width="1"/><rect x="0" y="0" width="15" height="2.4" fill="#27376b"/><path d="M1.4 4.2 H6.6 M1.4 6.2 H6.6 M1.4 8.2 H6.6 M1.4 10.2 H6.6 M1.4 12 H6.6" stroke="#b8c8ee" stroke-width="1"/><path d="M0 13.7 H15" stroke="#3c4668" stroke-width="1"/></svg>
<svg style="left:253px;top:139px" width="14" height="14" viewBox="0 0 14 14"><path d="M1.4 1 Q6 5.4 12.4 12.6" fill="none" stroke="#151515" stroke-width="1.7" stroke-linecap="round"/><path d="M12.2 1.4 Q6.6 6.6 2 13" fill="none" stroke="#151515" stroke-width="1.7" stroke-linecap="round"/></svg>
<svg style="left:289px;top:137px" width="18" height="18" viewBox="0 0 18 18"><defs><radialGradient id="hg" cx="0.35" cy="0.3" r="0.8"><stop offset="0" stop-color="#d8d8d8"/><stop offset="0.6" stop-color="#6a6a6a"/><stop offset="1" stop-color="#2e2e2e"/></radialGradient><linearGradient id="ag" x1="0" y1="0" x2="0" y2="1"><stop offset="0" stop-color="#7db4f8"/><stop offset="1" stop-color="#1c5ed0"/></linearGradient></defs><circle cx="3.6" cy="4.8" r="2.9" fill="url(#hg)"/><circle cx="10" cy="4" r="3.2" fill="url(#hg)"/><path d="M1 13.6 Q0.6 8.6 4 8.6 Q7.2 8.6 7.6 12 V13.8 Z" fill="#6a80e6" stroke="#4054c0" stroke-width="0.6"/><path d="M7 8.6 L9 7.4 H11 L13 8.6 L12.4 10 H7.8 Z" fill="#5cb85a" stroke="#3b8040" stroke-width="0.5"/><path d="M8.8 7.8 L10 9.4 L11.2 7.8 Z" fill="#fff"/><path d="M8 10.6 H12.6 V8.6 L17.2 12.6 L12.6 16.6 V14.6 H8 Z" fill="url(#ag)" stroke="#2a62c8" stroke-width="0.7"/></svg>
<svg style="left:327px;top:137px" width="19" height="18" viewBox="0 0 19 18"><rect x="1.5" y="1.4" width="11" height="8.8" fill="#fff" stroke="#7d90c4" stroke-width="0.9"/><rect x="1.1" y="0.9999999999999999" width="11.8" height="2" fill="#ae3a6c"/><path d="M1.7 10.3 H12.6 V3.4" fill="none" stroke="#32467c" stroke-width="0.9"/><rect x="3.5" y="4.3" width="11.4" height="9.2" fill="#fff" stroke="#7d90c4" stroke-width="0.9"/><rect x="3.1" y="3.9" width="12.200000000000001" height="2" fill="#ae3a6c"/><path d="M3.7 13.6 H15.0 V6.3" fill="none" stroke="#32467c" stroke-width="0.9"/><rect x="5.5" y="7.4" width="11.4" height="9.2" fill="#fff" stroke="#7d90c4" stroke-width="0.9"/><rect x="5.1" y="7.0" width="12.200000000000001" height="2" fill="#ae3a6c"/><path d="M5.7 16.700000000000003 H17.0 V9.4" fill="none" stroke="#32467c" stroke-width="0.9"/><path d="M7.9 11.4 H10.1 M7.9 13.600000000000001 H10.1 M11.5 11.4 H15.5" stroke="#4a72cc" stroke-width="1"/><rect x="11.5" y="13.0" width="4" height="2.2" fill="#fff" stroke="#4a72cc" stroke-width="0.9"/></svg>
<svg style="left:368.4px;top:137.7px" width="18" height="18" viewBox="0 0 18 18"><defs><linearGradient id="cg" x1="0" y1="0" x2="1" y2="1"><stop offset="0.25" stop-color="#ffffff"/><stop offset="1" stop-color="#9fb8e6"/></linearGradient></defs><rect x="4.2" y="2.2" width="12.6" height="12.4" rx="0.8" fill="url(#cg)" stroke="#7f9ad0" stroke-width="0.9"/><path d="M8.6 1 H12.2 V2.6 H13.4 V5.2 H7.4 V2.6 H8.6 Z" fill="#e6d488" stroke="#8d7c3c" stroke-width="0.7"/><rect x="9.4" y="2.2" width="2" height="1" fill="#fff8d8"/><path d="M7 9 L9.2 12 L16 5.4" fill="none" stroke="#f0603e" stroke-width="1.5"/><rect x="1" y="9.8" width="2.8" height="5.6" fill="#52b044" stroke="#2f7e28" stroke-width="0.5"/><path d="M4 11.2 Q7 10.1 9.4 12 Q11.6 13 10.8 14.8 Q9 16.6 6.4 15.8 Q4.8 15.2 4 14.4 Z" fill="#f3d256" stroke="#5e4a10" stroke-width="0.8"/><path d="M6.4 13.4 Q8 12.8 9.6 14" fill="none" stroke="#5e4a10" stroke-width="0.8"/></svg>
<svg style="left:406.4px;top:137.7px" width="18" height="18" viewBox="0 0 18 18"><rect x="6.2" y="2.2" width="10.8" height="11" rx="0.8" fill="url(#cg)" stroke="#7f9ad0" stroke-width="0.9"/><path d="M10 1 H13 V2.4 H14 V5 H9 V2.4 H10 Z" fill="#e6d488" stroke="#8d7c3c" stroke-width="0.7"/><rect x="1" y="7.8" width="2.8" height="5.6" fill="#52b044" stroke="#2f7e28" stroke-width="0.5"/><path d="M4 9.2 Q7 8.1 9.4 10 Q11.6 11 10.8 12.8 Q9 14.6 6.4 13.8 Q4.8 13.2 4 12.4 Z" fill="#f3d256" stroke="#5e4a10" stroke-width="0.8"/><path d="M6.4 11.4 Q8 10.8 9.6 12" fill="none" stroke="#5e4a10" stroke-width="0.8"/><path d="M9.2 6.4 L16.4 15.4 M16.8 4.4 L9.2 15.2" fill="none" stroke="#f2382c" stroke-width="1.7"/><path d="M10.6 5.6 L14 10" fill="none" stroke="#f46a5c" stroke-width="1"/></svg>
<svg style="left:993.5px;top:166.6px" width="11" height="11" viewBox="0 0 11 11"><path d="M9.7 4.6 A4.4 4.4 0 0 0 1.5 4.2" fill="none" stroke="#444" stroke-width="1.5"/><path d="M7 5 H10.6 V1.4 Z" fill="#444"/><path d="M1.3 6.4 A4.4 4.4 0 0 0 9.5 6.8" fill="none" stroke="#444" stroke-width="1.5"/><path d="M4 6 H0.4 V9.6 Z" fill="#444"/></svg>
<div class="a" style="left:3px;top:602px;width:200px;height:25px;background:#fff"></div><div class="t" style="left:7px;top:610px;font-weight:bold;color:#000;letter-spacing:-0.3px">Status: Existing</div>
</body></html>
